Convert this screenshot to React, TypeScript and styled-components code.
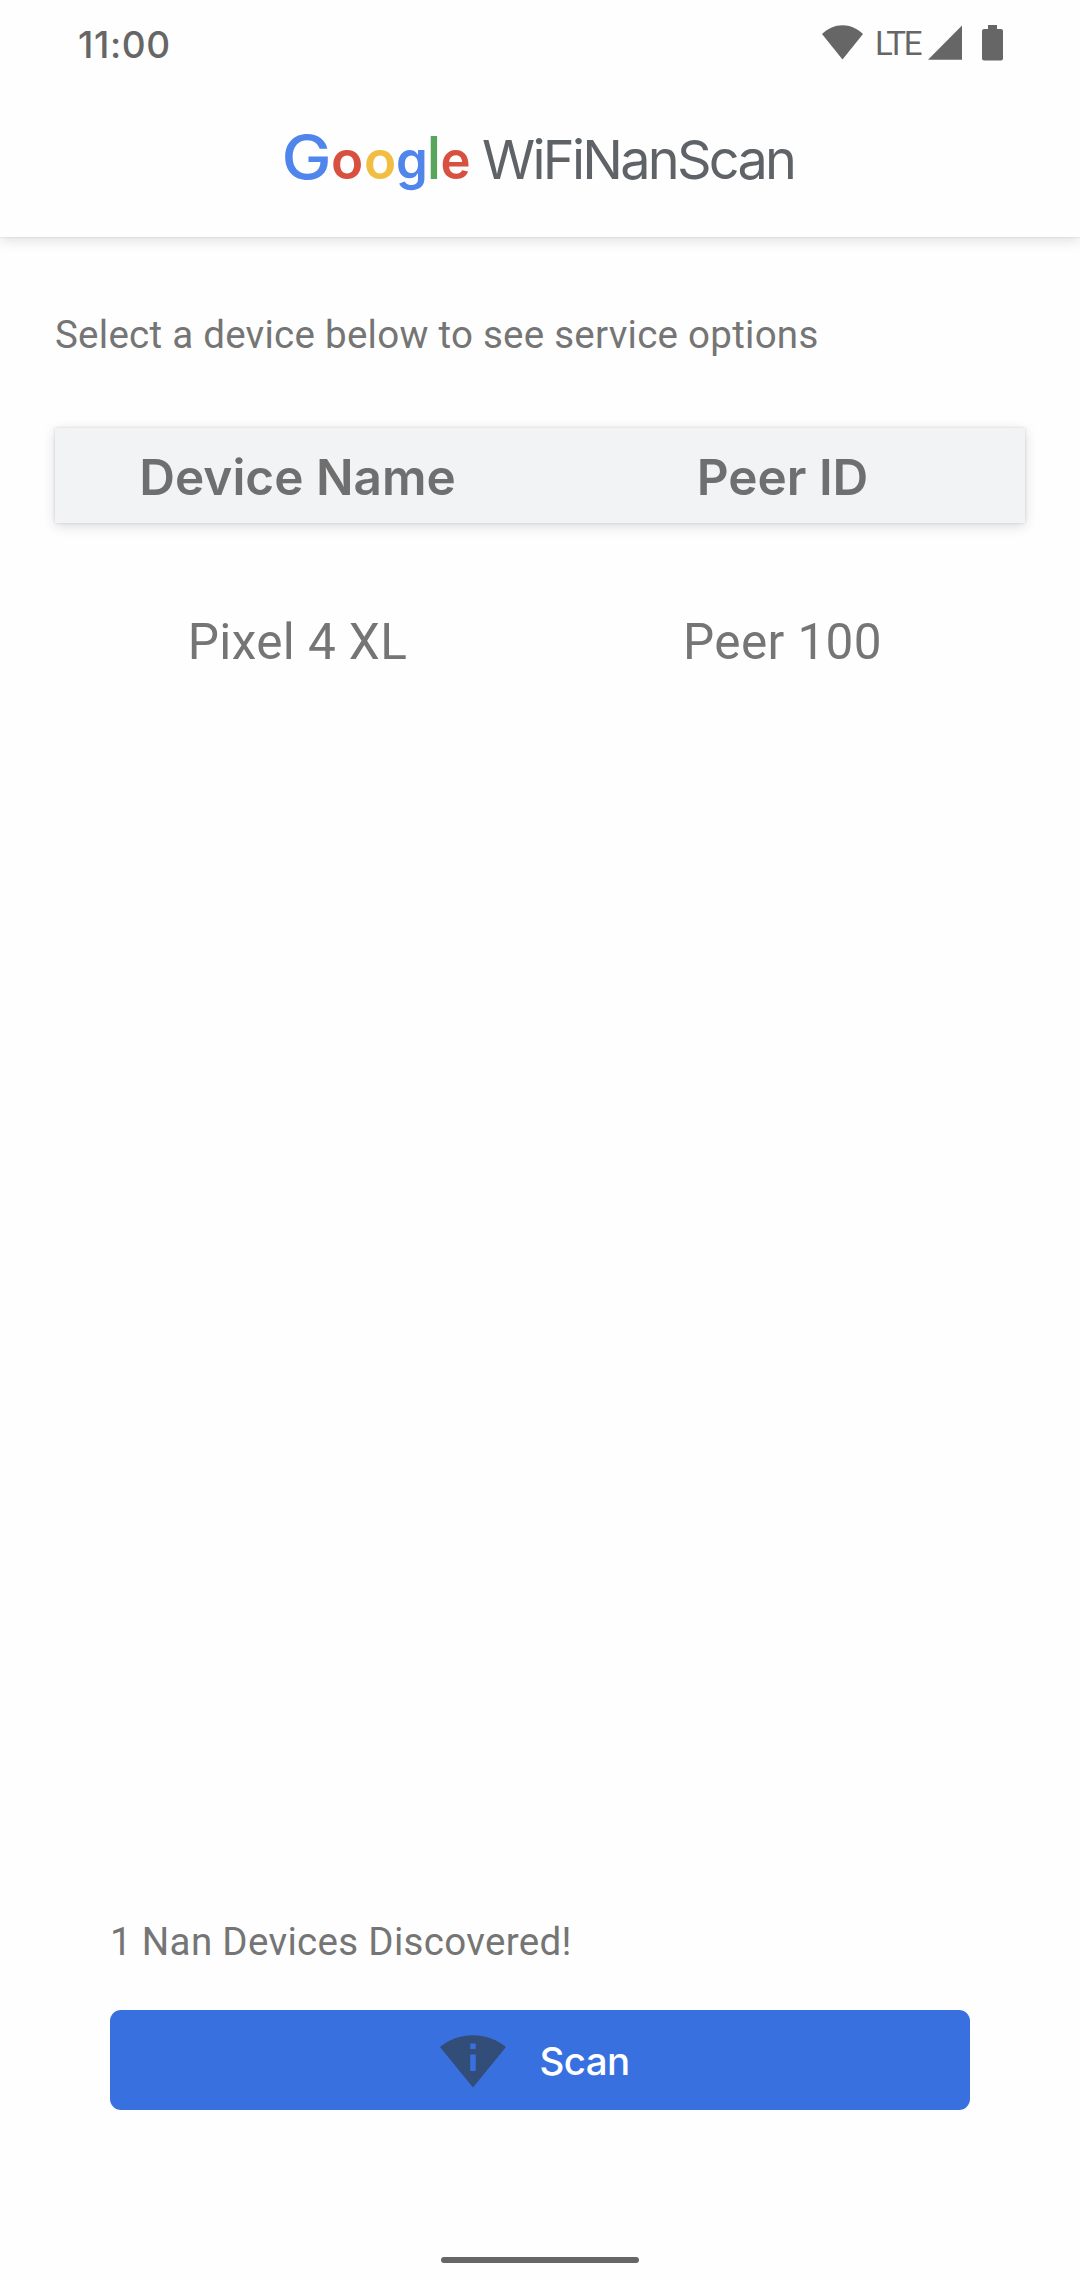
import React from 'react';
import styled, { createGlobalStyle } from 'styled-components';

const Global = createGlobalStyle`
  * { box-sizing: border-box; }
  body { margin: 0; background: #fefefe; }
`;

const Screen = styled.div`
  width: 1080px;
  height: 2280px;
  display: flex;
  flex-direction: column;
  background: #fefefe;
  color: #757575;
  font-family: Roboto, 'Noto Sans', sans-serif;
  overflow: hidden;
`;

const StatusBar = styled.div`
  height: 88px;
  flex: none;
  display: flex;
  align-items: flex-start;
  justify-content: space-between;
  padding: 22px 77px 0 78px;
  color: #666;
`;

const Clock = styled.div`
  font: 500 37px/45px Inter, sans-serif;
  letter-spacing: 0.6px;
`;

const StatusIcons = styled.div`
  display: flex;
  align-items: flex-start;
  padding-top: 3px;
  svg { display: block; fill: #666; }
`;

const Network = styled.span`
  font: 400 33px/39px Roboto, sans-serif;
  letter-spacing: -2.1px;
  margin: -1px 7px 0 12px;
  width: 46px;
  white-space: nowrap;
`;

const Battery = styled.div`
  margin-left: 20px;
`;

const TopArea = styled.div`
  flex: none;
  background: #fefefe;
  box-shadow: 0 0 2px rgba(0, 0, 0, 0.12), 0 3px 13px rgba(0, 0, 0, 0.13);
`;

const AppBar = styled.header`
  height: 149px;
  display: flex;
  align-items: baseline;
  padding: 34px 0 0 283px;
`;

const Letter = styled.span<{ $color: string; $size: number; $slot: number; $weight: number; $stretch: number }>`
  display: flex;
  justify-content: center;
  width: ${(p) => p.$slot}px;
  font: ${(p) => p.$weight} ${(p) => p.$size}px/70px Inter, sans-serif;
  color: ${(p) => p.$color};
  transform: scaleX(${(p) => p.$stretch});
`;

const AppName = styled.span`
  margin-left: 11px;
  font: 400 54px/70px Inter, sans-serif;
  letter-spacing: -2.75px;
  color: #5f6368;
`;

const Main = styled.main`
  flex: 1;
  padding: 0 55px;
`;

const Hint = styled.p`
  margin: 75px 0 71px;
  font-size: 38.5px;
  line-height: 45px;
  letter-spacing: 0.26px;
`;

const TableHead = styled.div`
  display: grid;
  grid-template-columns: 1fr 1fr;
  height: 95px;
  padding-top: 19px;
  background: #f1f3f4;
  box-shadow: 0 0 3px rgba(0, 0, 0, 0.13), 0 3px 12px rgba(0, 0, 0, 0.14);
  color: #6f6f6f;
  text-align: center;
  font: 600 49.5px/60px Inter, sans-serif;
`;

const TableRow = styled.div`
  display: grid;
  grid-template-columns: 1fr 1fr;
  margin-top: 90px;
  text-align: center;
  font-size: 49.5px;
  line-height: 58px;
  letter-spacing: 0.4px;
`;

const Footer = styled.footer`
  height: 361px;
  flex: none;
  display: flex;
  flex-direction: column;
  padding: 0 110px;
`;

const Result = styled.p`
  margin: 0;
  font-size: 38.5px;
  line-height: 45px;
  letter-spacing: 0.32px;
`;

const ScanButton = styled.button`
  display: flex;
  align-items: center;
  justify-content: center;
  gap: 33px;
  width: 860px;
  height: 100px;
  margin-top: 46px;
  padding: 0 10px 0 0;
  border: 0;
  border-radius: 11px;
  background: #3870e0;
  color: #fff;
  font: 500 38.5px/46px Inter, sans-serif;
  letter-spacing: -0.6px;
  svg { fill: #314d78; }
`;

const ScanLabel = styled.span`
  padding-top: 2px;
`;

const HomeHandle = styled.div`
  width: 198px;
  height: 6px;
  margin: 147px auto 0;
  border-radius: 3px;
  background: #666;
`;

const LOGO = [
  { char: 'G', color: '#5086ec', size: 61, slot: 47, weight: 500, stretch: 1.1 },
  { char: 'o', color: '#d85040', size: 53, slot: 34.5, weight: 600, stretch: 1 },
  { char: 'o', color: '#f2be42', size: 53, slot: 31.5, weight: 600, stretch: 1 },
  { char: 'g', color: '#5086ec', size: 53, slot: 32, weight: 600, stretch: 0.96 },
  { char: 'l', color: '#58a55c', size: 59, slot: 12, weight: 500, stretch: 1 },
  { char: 'e', color: '#d85040', size: 53, slot: 31, weight: 600, stretch: 0.96 },
];

const DEVICES = [{ name: 'Pixel 4 XL', peer: 'Peer 100' }];

export default function App() {
  return (
    <Screen>
      <Global />
      <TopArea>
        <StatusBar>
          <Clock>11:00</Clock>
          <StatusIcons>
            <svg width="41" height="35" viewBox="0 0 41 35">
              <path d="M0 9C6 3.2 13 0.3 20.5 0.3S35 3.2 41 9L20.5 34.5z" />
            </svg>
            <Network>LTE</Network>
            <svg width="34" height="35" viewBox="0 0 34 35">
              <path d="M34 0.5V34.7H0z" />
            </svg>
            <Battery>
              <svg width="21" height="36" viewBox="0 0 21 36">
                <path d="M6 0h9v4h4q2 0 2 2v27.5q0 2-2 2H2q-2 0-2-2V6q0-2 2-2h4z" />
              </svg>
            </Battery>
          </StatusIcons>
        </StatusBar>
        <AppBar>
          {LOGO.map((l, i) => (
            <Letter key={i} $color={l.color} $size={l.size} $slot={l.slot} $weight={l.weight} $stretch={l.stretch}>
              {l.char}
            </Letter>
          ))}
          <AppName>WiFiNanScan</AppName>
        </AppBar>
      </TopArea>
      <Main>
        <Hint>Select a device below to see service options</Hint>
        <TableHead>
          <span>Device Name</span>
          <span>Peer ID</span>
        </TableHead>
        {DEVICES.map((d) => (
          <TableRow key={d.name}>
            <span>{d.name}</span>
            <span>{d.peer}</span>
          </TableRow>
        ))}
      </Main>
      <Footer>
        <Result>{DEVICES.length} Nan Devices Discovered!</Result>
        <ScanButton>
          <svg width="66" height="66" viewBox="0 0 24 24">
            <path d="M12 3C6.95 3 3.15 4.85 0 7.23L12 22 24 7.25C20.85 4.87 17.05 3 12 3zm1 13h-2v-6h2v6zm-2-8V6h2v2h-2z" />
          </svg>
          <ScanLabel>Scan</ScanLabel>
        </ScanButton>
        <HomeHandle />
      </Footer>
    </Screen>
  );
}
